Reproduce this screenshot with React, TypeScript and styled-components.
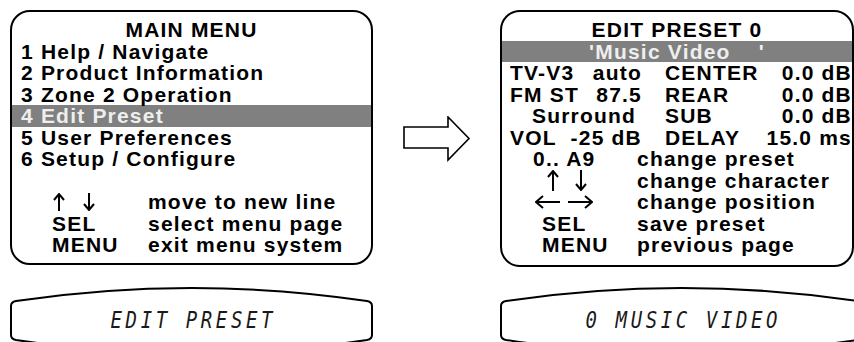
import React from "react";
import styled, { createGlobalStyle } from "styled-components";

const GlobalStyle = createGlobalStyle`
  html, body {
    margin: 0;
    padding: 0;
    background: #ffffff;
    overflow: hidden;
  }
  body {
    font-family: "Liberation Sans", Arial, sans-serif;
  }
`;

type Dir = "up" | "down" | "left" | "right";

const Arrow = ({ dir, len, head = 6, spread = 5 }: { dir: Dir; len: number; head?: number; spread?: number }) => {
  const c = spread + 1;
  const across = spread * 2 + 2;
  const vertical = dir === "up" || dir === "down";
  const w = vertical ? across : len;
  const h = vertical ? len : across;
  let line = "";
  let tip = "";
  if (dir === "up") {
    line = `M${c} 1 L${c} ${len}`;
    tip = `${c - spread},${1 + head} ${c},1 ${c + spread},${1 + head}`;
  } else if (dir === "down") {
    line = `M${c} 0 L${c} ${len - 1}`;
    tip = `${c - spread},${len - 1 - head} ${c},${len - 1} ${c + spread},${len - 1 - head}`;
  } else if (dir === "left") {
    line = `M1 ${c} L${len} ${c}`;
    tip = `${1 + head},${c - spread} 1,${c} ${1 + head},${c + spread}`;
  } else {
    line = `M0 ${c} L${len - 1} ${c}`;
    tip = `${len - 1 - head},${c - spread} ${len - 1},${c} ${len - 1 - head},${c + spread}`;
  }
  return (
    <svg width={w} height={h} viewBox={`0 0 ${w} ${h}`} style={{ display: "block" }}>
      <path d={line} stroke="#000" strokeWidth={2} fill="none" />
      <polyline points={tip} stroke="#000" strokeWidth={2} fill="none" />
    </svg>
  );
};

const Page = styled.div`
  width: 863px;
  height: 342px;
  box-sizing: border-box;
  padding: 10px 0 0 10px;
  display: flex;
  flex-direction: column;
  gap: 20px;
`;

const TopRow = styled.div`
  display: flex;
  align-items: flex-start;
`;

const BottomRow = styled.div`
  display: flex;
  gap: 127px;
`;

const Screen = styled.div<{ $w: number; $h: number; $pad: number }>`
  width: ${(p) => p.$w}px;
  height: ${(p) => p.$h}px;
  box-sizing: border-box;
  border: 2px solid #000;
  border-radius: 20px;
  padding: 7px ${(p) => p.$pad}px 0;
  color: #000;
  font-size: 21px;
  font-weight: bold;
  letter-spacing: 1.2px;
  line-height: 21.5px;
`;

const Line = styled.div`
  height: 21.5px;
  white-space: pre;
`;

const Title = styled(Line)`
  text-align: center;
`;

const Highlight = styled(Line)<{ $pad: number; $center?: boolean }>`
  margin: 0 -${(p) => p.$pad}px;
  padding: 0 ${(p) => p.$pad}px;
  background: #808080;
  color: #eeeeee;
  text-align: ${(p) => (p.$center ? "center" : "left")};
`;

const StatRow = styled(Line)`
  display: grid;
  grid-template-columns: 132px 1fr;
  column-gap: 23px;
  margin-right: -8px;
`;

const StatCell = styled.div<{ $indent?: number }>`
  display: flex;
  justify-content: space-between;
  padding-left: ${(p) => p.$indent ?? 0}px;
`;

const KeyRow = styled(Line)`
  display: grid;
  grid-template-columns: 127px 1fr;
`;

const KeyCell = styled.div<{ $indent: number; $gap?: number }>`
  display: flex;
  align-items: center;
  gap: ${(p) => p.$gap ?? 0}px;
  padding-left: ${(p) => p.$indent}px;
  height: 21.5px;
`;

const ArrowColumn = styled.div`
  width: 127px;
  height: 257px;
  display: flex;
  align-items: center;
  padding-left: 30px;
  box-sizing: border-box;
`;

const Display = styled.div`
  position: relative;
  width: 363px;
  height: 66px;
  flex-shrink: 0;
`;

const Bezel = styled.svg`
  position: absolute;
  left: 0;
  top: 0;
  overflow: visible;
`;

const LcdText = styled.div`
  position: relative;
  padding-top: 20px;
  text-align: center;
`;

const LcdGlyphs = styled.span`
  display: inline-block;
  margin-left: 3.6px;
  transform: scaleY(1.22);
  transform-origin: top center;
  font-family: "DejaVu Sans Mono", "Liberation Mono", monospace;
  font-style: italic;
  font-size: 19px;
  line-height: 20px;
  letter-spacing: 3.6px;
  color: #1a1a1a;
  white-space: pre;
`;

const BigArrow = () => (
  <svg width="68" height="46" viewBox="0 0 68 46">
    <polygon
      points="1,11 45,11 45,1 66,22.5 45,44 45,32 1,32"
      fill="#fff"
      stroke="#000"
      strokeWidth={1.6}
      strokeLinejoin="miter"
    />
  </svg>
);

const LcdDisplay = ({ text }: { text: string }) => {
  const W = 363;
  const d = `M1 19 Q1 15 6 14 Q${W / 2} -12 ${W - 6} 14 Q${W - 1} 15 ${W - 1} 19 L${W - 1} 48 Q${W - 1} 52 ${W - 6} 53 Q${W / 2} 79 6 53 Q1 52 1 48 Z`;
  return (
    <Display>
      <Bezel width={W} height={68} viewBox={`0 0 ${W} 68`}>
        <path d={d} fill="none" stroke="#000" strokeWidth={2} />
      </Bezel>
      <LcdText>
        <LcdGlyphs>{text}</LcdGlyphs>
      </LcdText>
    </Display>
  );
};

const mainItems = [
  "1 Help / Navigate",
  "2 Product Information",
  "3 Zone 2 Operation",
  "4 Edit Preset",
  "5 User Preferences",
  "6 Setup / Configure",
];

const stats = [
  { a: "TV-V3", b: "auto", c: "CENTER", d: "0.0 dB" },
  { a: "FM ST", b: "87.5", c: "REAR", d: "0.0 dB" },
  { a: "Surround", b: "", c: "SUB", d: "0.0 dB", indent: 22 },
  { a: "VOL", b: "-25 dB", c: "DELAY", d: "15.0 ms" },
];

const App = () => {
  return (
    <>
      <GlobalStyle />
      <Page>
        <TopRow>
          <Screen $w={363} $h={255} $pad={9}>
            <Title>MAIN MENU</Title>
            {mainItems.map((item) =>
              item.startsWith("4") ? (
                <Highlight key={item} $pad={9}>
                  {item}
                </Highlight>
              ) : (
                <Line key={item}>{item}</Line>
              )
            )}
            <Line />
            <KeyRow>
              <KeyCell $indent={32} $gap={18}>
                <Arrow dir="up" len={18} />
                <Arrow dir="down" len={18} />
              </KeyCell>
              <span>move to new line</span>
            </KeyRow>
            <KeyRow>
              <KeyCell $indent={31}>SEL</KeyCell>
              <span>select menu page</span>
            </KeyRow>
            <KeyRow>
              <KeyCell $indent={31}>MENU</KeyCell>
              <span>exit menu system</span>
            </KeyRow>
          </Screen>

          <ArrowColumn>
            <BigArrow />
          </ArrowColumn>

          <Screen $w={354} $h={257} $pad={8}>
            <Title>EDIT PRESET 0</Title>
            <Highlight $pad={8} $center>
              {"'Music Video    '"}
            </Highlight>
            {stats.map((s) => (
              <StatRow key={s.a}>
                <StatCell $indent={s.indent}>
                  <span>{s.a}</span>
                  <span>{s.b}</span>
                </StatCell>
                <StatCell>
                  <span>{s.c}</span>
                  <span>{s.d}</span>
                </StatCell>
              </StatRow>
            ))}
            <KeyRow>
              <KeyCell $indent={23}>0.. A9</KeyCell>
              <span>change preset</span>
            </KeyRow>
            <KeyRow>
              <KeyCell $indent={37} $gap={16}>
                <Arrow dir="up" len={21} />
                <Arrow dir="down" len={21} />
              </KeyCell>
              <span>change character</span>
            </KeyRow>
            <KeyRow>
              <KeyCell $indent={25} $gap={8}>
                <Arrow dir="left" len={25} head={7} spread={6} />
                <Arrow dir="right" len={25} head={7} spread={6} />
              </KeyCell>
              <span>change position</span>
            </KeyRow>
            <KeyRow>
              <KeyCell $indent={32}>SEL</KeyCell>
              <span>save preset</span>
            </KeyRow>
            <KeyRow>
              <KeyCell $indent={32}>MENU</KeyCell>
              <span>previous page</span>
            </KeyRow>
          </Screen>
        </TopRow>

        <BottomRow>
          <LcdDisplay text="EDIT PRESET" />
          <LcdDisplay text="0 MUSIC VIDEO" />
        </BottomRow>
      </Page>
    </>
  );
};

export default App;
